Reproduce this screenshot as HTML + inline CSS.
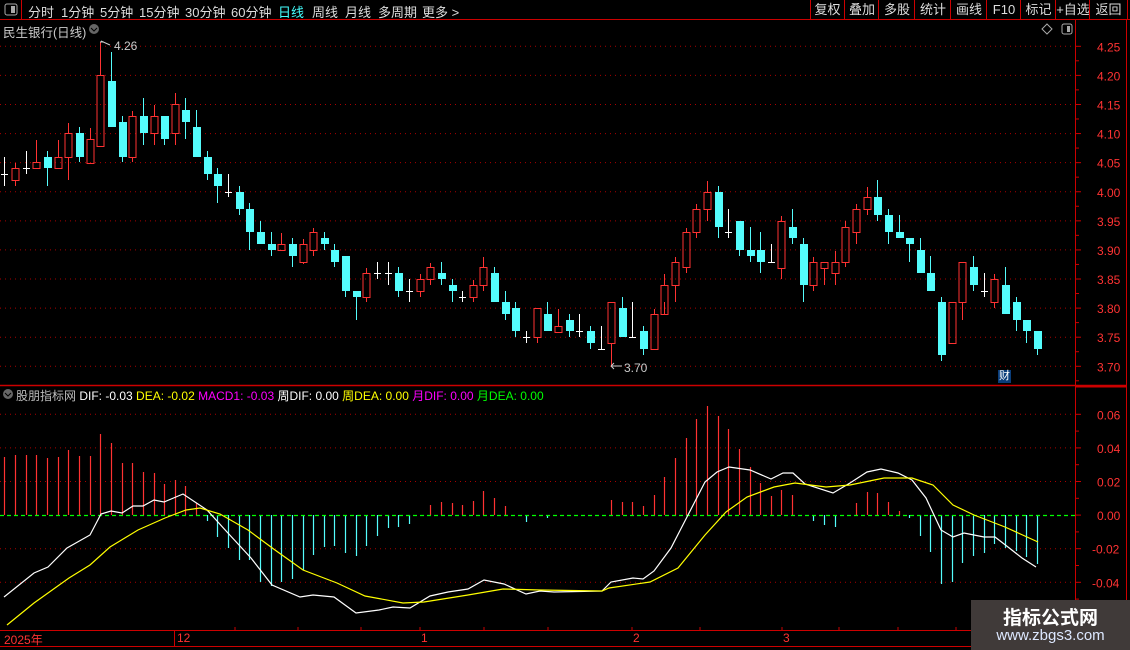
<!DOCTYPE html>
<html><head><meta charset="utf-8">
<style>
html,body{margin:0;padding:0;background:#000;width:1130px;height:650px;overflow:hidden}
body{font-family:"Liberation Sans","Noto Sans CJK SC",sans-serif;position:relative}
svg{position:absolute;left:0;top:0}
.t{position:absolute;font-size:12px;white-space:nowrap;color:#ddd}
.n{position:absolute;top:2px;font-size:13px;color:#ddd;white-space:nowrap}
.btn{position:absolute;top:0;height:19px;line-height:19px;font-size:13px;color:#ddd;text-align:center;border-left:1px solid #c00}
</style></head><body>
<svg id="s" width="1130" height="650"></svg>
<span class="n" style="left:28px">分时</span>
<span class="n" style="left:61px">1分钟</span>
<span class="n" style="left:100px">5分钟</span>
<span class="n" style="left:139px">15分钟</span>
<span class="n" style="left:185px">30分钟</span>
<span class="n" style="left:231px">60分钟</span>
<span class="n" style="left:278px;color:#4ff">日线</span>
<span class="n" style="left:312px">周线</span>
<span class="n" style="left:345px">月线</span>
<span class="n" style="left:378px">多周期</span>
<span class="n" style="left:422px">更多 &gt;</span>
<div class="btn" style="left:810px;width:33px">复权</div>
<div class="btn" style="left:844px;width:34px">叠加</div>
<div class="btn" style="left:878px;width:36px">多股</div>
<div class="btn" style="left:914px;width:36px">统计</div>
<div class="btn" style="left:950px;width:36px">画线</div>
<div class="btn" style="left:986px;width:34px">F10</div>
<div class="btn" style="left:1020px;width:35px">标记</div>
<div class="btn" style="left:1055px;width:34px">+自选</div>
<div class="btn" style="left:1089px;width:37px;border-right:1px solid #c00">返回</div>
<div class="t" style="left:3px;top:22px;font-size:12.5px;color:#ccc">民生银行(日线)</div>
<div class="t" style="left:114px;top:39px;color:#ccc">4.26</div>
<div class="t" style="left:624px;top:361px;color:#ccc">3.70</div>
<div class="t" style="left:998px;top:370px;background:#0a3d7a;color:#fff;font-size:11px;line-height:13px;padding:0 1px">财</div>
<div class="t" style="left:16px;top:387px;color:#bbb">股朋指标网 <span style="color:#fff">DIF: -0.03</span> <span style="color:#ff0">DEA: -0.02</span> <span style="color:#f0f">MACD1: -0.03</span> <span style="color:#fff">周DIF: 0.00</span> <span style="color:#ff0">周DEA: 0.00</span> <span style="color:#f0f">月DIF: 0.00</span> <span style="color:#0f0">月DEA: 0.00</span></div>
<div class="t" style="left:4px;top:631px;color:#f33">2025年</div>
<div class="t" style="left:177px;top:631px;color:#f33">12</div>
<div class="t" style="left:421px;top:631px;color:#f33">1</div>
<div class="t" style="left:633px;top:631px;color:#f33">2</div>
<div class="t" style="left:783px;top:631px;color:#f33">3</div>
<div style="position:absolute;left:971px;top:600px;width:159px;height:50px;background:#403a39"></div>
<div class="t" style="left:971px;width:159px;text-align:center;top:603px;font-size:19px;font-weight:bold;color:#fff">指标公式网</div>
<div class="t" style="left:971px;width:159px;text-align:center;top:627px;font-size:15px;color:#dde8ff">www.zbgs3.com</div>
<script>
var s=document.getElementById('s'),h='';
function L(x1,y1,x2,y2,c,w,d){h+='<line x1="'+x1+'" y1="'+y1+'" x2="'+x2+'" y2="'+y2+'" stroke="'+c+'" stroke-width="'+(w||1)+'"'+(d?' stroke-dasharray="'+d+'"':'')+'/>';}
L(0,19.5,1130,19.5,'#c00');L(21.5,0,21.5,19,'#c00');
h+='<rect x="5" y="4" width="12" height="11" rx="2" fill="none" stroke="#aaa"/><rect x="11" y="6" width="4" height="7" fill="#aaa"/>';
h+='<rect x="1062" y="24" width="10" height="10" rx="2" fill="none" stroke="#aaa"/><rect x="1067" y="26" width="3" height="6" fill="#aaa"/>';
h+='<path d="M1047 24 L1052 29 L1047 34 L1042 29Z" fill="none" stroke="#aaa"/>';
L(1075.5,20,1075.5,630,'#c00');L(1126.5,20,1126.5,650,'#c00');
L(0,385.5,1126,385.5,'#c00',1.5);L(1075,386.5,1126,386.5,'#c00',2);
L(0,630.5,1130,630.5,'#c00');L(0,646.5,1130,646.5,'#c00');L(174.5,630,174.5,646,'#c00');
[235,298,361,420,484,548,632,700,782,839,898,956].forEach(function(x){L(x,631,x,627,'#c00');});
for(var i=0;i<12;i++){var y=46.3+i*29.09,p=(4.25-i*0.05).toFixed(2);L(0,y,1075,y,'#a00',1,'1 4');L(1075,y,1081,y,'#c00');L(1075,y+14.5,1079,y+14.5,'#c00');
h+='<text x="1097" y="'+(y+5)+'" fill="#f33" font-size="12" font-family="Liberation Sans">'+p+'</text>';}
var mv=['0.06','0.04','0.02','0.00','-0.02','-0.04'];
for(i=0;i<6;i++){var y=414.3+i*33.6;if(i!=3)L(0,y,1075,y,'#a00',1,'1 4');L(1075,y,1081,y,'#c00');L(1075,y+16.8,1079,y+16.8,'#c00');
h+='<text x="'+(i>3?1092:1097)+'" y="'+(y+5)+'" fill="#f33" font-size="12" font-family="Liberation Sans">'+mv[i]+'</text>';}
var C=[[4,157,186,174,174,'w'],[15,163,186,168,180,'r'],[26,151,174,168,168,'w'],[36,140,168,162,168,'r'],[47,151,186,157,168,'c'],[58,140,168,157,168,'r'],[68,123,180,133,157,'r'],[79,127,162,133,157,'c'],[90,128,163,139,163,'r'],[100,42,146,75,146,'r'],[111,52,127,81,127,'c'],[122,116,162,122,157,'c'],[132,111,162,116,157,'r'],[143,98,145,116,133,'c'],[154,105,145,116,133,'r'],[164,116,145,116,139,'c'],[175,93,145,104,133,'r'],[185,98,139,110,122,'c'],[196,110,157,127,157,'c'],[207,151,180,157,174,'c'],[217,168,203,174,186,'c'],[228,174,197,192,192,'w'],[239,186,215,192,209,'c'],[249,203,250,209,232,'c'],[260,221,244,232,244,'c'],[271,232,256,244,250,'c'],[281,233,250,244,250,'r'],[292,238,267,244,256,'c'],[303,239,264,244,262,'r'],[313,228,256,232,250,'r'],[324,232,250,238,244,'c'],[334,244,267,250,262,'c'],[345,256,297,256,291,'c'],[356,291,320,291,297,'c'],[366,268,302,273,297,'r'],[377,262,279,273,273,'w'],[388,262,285,273,273,'w'],[398,267,297,273,291,'c'],[409,279,302,291,291,'w'],[420,274,297,279,291,'r'],[430,263,285,267,279,'r'],[441,262,285,273,279,'c'],[452,279,302,285,291,'c'],[462,291,302,297,297,'w'],[473,280,302,285,297,'r'],[483,257,291,267,285,'r'],[494,267,302,273,302,'c'],[505,291,320,302,314,'c'],[515,302,337,308,331,'c'],[526,331,343,337,337,'w'],[537,308,343,308,337,'r'],[547,302,331,314,331,'c'],[558,309,332,326,332,'r'],[569,314,337,320,331,'c'],[579,314,337,331,331,'w'],[590,326,349,331,343,'c'],[601,326,349,349,349,'w'],[611,302,366,302,343,'r'],[622,297,337,308,337,'c'],[632,302,337,337,337,'w'],[643,326,355,331,349,'c'],[654,309,349,314,349,'r'],[664,274,302,285,314,'r'],[675,257,302,262,285,'r'],[686,228,273,232,267,'r'],[696,204,238,209,232,'r'],[707,181,221,192,209,'r'],[718,186,238,192,227,'c'],[728,209,238,232,232,'w'],[739,221,256,221,250,'c'],[750,227,262,250,256,'c'],[760,232,273,250,262,'c'],[771,244,262,262,262,'w'],[781,216,279,221,268,'r'],[792,209,244,227,238,'c'],[803,238,302,244,285,'c'],[813,257,291,262,285,'r'],[824,262,285,262,268,'r'],[835,251,285,262,273,'r'],[845,221,267,227,262,'r'],[856,204,244,209,232,'r'],[867,187,215,197,209,'r'],[877,180,221,197,215,'c'],[888,209,244,215,232,'c'],[899,215,238,232,238,'c'],[909,238,262,238,244,'c'],[920,238,273,250,273,'c'],[930,256,291,273,291,'c'],[941,297,361,302,355,'c'],[952,302,343,302,343,'r'],[962,262,320,262,302,'r'],[973,256,291,267,285,'c'],[984,273,297,291,291,'w'],[994,274,308,279,302,'r'],[1005,267,314,285,314,'c'],[1016,297,331,302,320,'c'],[1026,320,343,320,331,'c'],[1037,331,355,331,349,'c']];
var col={r:'#ff3232',c:'#54fcfc',w:'#fff'};
C.forEach(function(d){var x=d[0],c=col[d[5]];
 if(d[5]=='r'){L(x+.5,d[1],x+.5,d[3],c);L(x+.5,d[4],x+.5,d[2],c);h+='<rect x="'+(x-3)+'" y="'+(d[3]+.5)+'" width="7" height="'+Math.max(d[4]-d[3],1)+'" fill="none" stroke="'+c+'"/>';}
 else if(d[5]=='c'){L(x+.5,d[1],x+.5,d[2],c);h+='<rect x="'+(x-3)+'" y="'+d[3]+'" width="8" height="'+Math.max(d[4]-d[3],2)+'" fill="'+c+'"/>';}
 else{L(x+.5,d[1],x+.5,d[2],c);L(x-3,d[3]+.5,x+4,d[3]+.5,c);}
});
h+='<path d="M100 42 L104 42 M101 41 L110 45" stroke="#ccc" fill="none"/><path d="M611 366 L622 366 M611 366 L614 363 M611 366 L614 369" stroke="#ccc" fill="none"/>';
var B={1:457,2:455,3:455,4:455,5:458,6:457,7:450,8:456,9:456,10:434,11:443,12:463,13:463,14:472,15:473,16:484,17:480,18:486,19:503,20:521,21:537,22:548,23:560,24:560,25:582,26:586,27:582,28:579,29:570,30:555,31:547,32:546,33:553,34:556,35:546,36:536,37:528,38:527,39:524,41:505,42:502,43:503,44:505,45:501,46:491,47:498,48:506,50:522,52:518,58:500,59:502,60:502,61:506,62:495,63:477,64:458,65:438,66:419,67:406,68:416,69:429,70:449,71:467,72:483,73:496,74:490,75:495,77:521,78:525,79:527,81:503,82:492,83:493,84:502,85:511,86:518,87:536,88:552,89:584,90:582,91:563,92:556,93:553,94:544,95:548,96:551,97:557,98:564};
for(var k in B){var x=C[k-1][0]+.5,y=B[k];L(x,515,x,y,y<515?'#ff3232':'#54fcfc',1.2);}
L(0,515.5,1075,515.5,'#0f0',1.2,'4 3');
function P(pts,c){h+='<polyline points="'+pts+'" fill="none" stroke="'+c+'" stroke-width="1.2"/>';}
P('4,597 34,573 48,567 67,548 90,535 101,514 111,511 122,513 133,506 143,506 154,500 164,502 183,494 207,510 227,532 251,558 272,585 300,597 313,595 334,597 356,613 379,610 393,607 410,608 430,596 448,592 468,589 484,580 504,584 526,594 540,591 554,592 602,591 611,582 633,578 643,579 654,571 671,548 688,515 705,482 717,472 729,467 750,470 771,479 783,473 793,473 805,484 833,493 850,483 867,472 881,469 898,473 912,480 926,498 941,530 953,537 964,533 984,537 995,537 1008,547 1022,558 1036,567','#fff');
P('7,625 34,603 69,578 90,565 110,547 138,530 165,518 186,510 200,508 220,514 248,530 275,550 303,570 337,583 365,596 403,603 424,602 468,595 503,589 540,590 602,591 609,588 650,582 678,568 705,535 726,512 747,497 774,487 795,483 826,487 850,485 884,478 912,478 933,485 953,505 974,515 1005,527 1038,542','#ff0');
h+='<circle cx="8" cy="394" r="5" fill="#666"/><path d="M5 393 L8 396 L11 393" stroke="#000" fill="none"/>';
h+='<circle cx="94" cy="29" r="5" fill="#666"/><path d="M91 28 L94 31 L97 28" stroke="#000" fill="none"/>';
s.innerHTML=h;
</script>
</body></html>
